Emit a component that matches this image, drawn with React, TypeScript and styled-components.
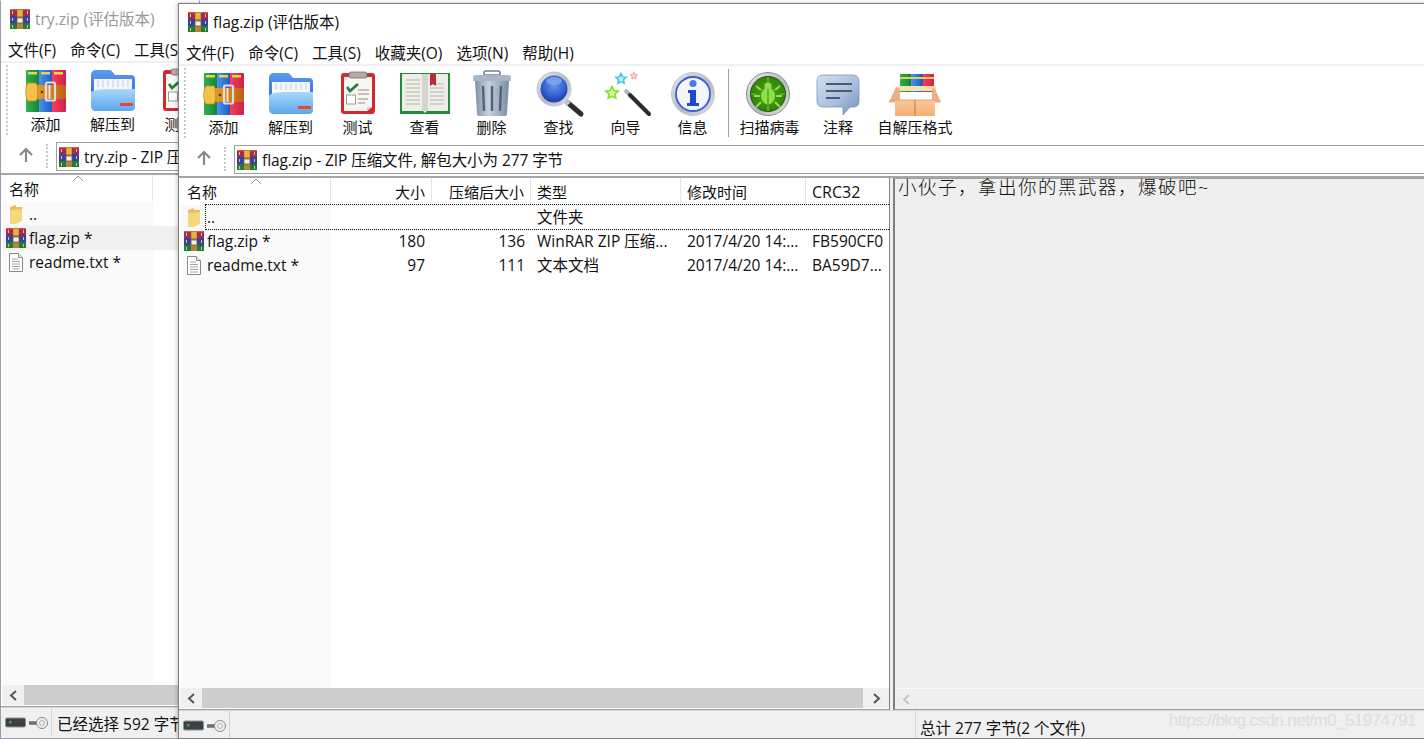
import React from "react";
import styled, { createGlobalStyle } from "styled-components";

const Global = createGlobalStyle`
  html, body { margin: 0; padding: 0; width: 1424px; height: 739px; overflow: hidden; background: #fff; }
  #root { width: 1424px; height: 739px; }
`;

const Desktop = styled.div`
  position: relative;
  width: 1424px;
  height: 739px;
  overflow: hidden;
  font-family: "Open Sans", "Noto Sans CJK SC", sans-serif;
  font-size: 15.5px;
  color: #111;
`;

const Frame = styled.section<{ $front?: boolean }>`
  position: absolute;
  left: ${(p) => (p.$front ? "178px" : "0")};
  top: ${(p) => (p.$front ? "3px" : "0")};
  width: ${(p) => (p.$front ? "1260px" : "200px")};
  height: ${(p) => (p.$front ? "736px" : "739px")};
  box-sizing: border-box;
  display: flex;
  flex-direction: column;
  overflow: hidden;
  background: #fff;
  border: 1px solid ${(p) => (p.$front ? "#7f7f7f" : "#9d9db0")};
  border-top-color: ${(p) => (p.$front ? "#7f7f7f" : "#fff")};
`;

const FrontShadow = styled.div`
  position: absolute;
  left: 178px;
  top: 3px;
  width: 1260px;
  height: 736px;
  box-shadow: -1px 0 4px rgba(0,0,0,.22);
`;

const TitleBar = styled.header<{ $front?: boolean }>`
  height: 37px;
  flex: none;
  display: flex;
  align-items: center;
  gap: 5px;
  padding: 0 0 2px 9px;
  box-sizing: border-box;
  color: ${(p) => (p.$front ? "#111" : "#999")};
`;

const MenuBar = styled.nav`
  height: 23px;
  flex: none;
  display: flex;
  gap: 14px;
  padding-left: 7px;
  align-items: center;
  border-bottom: 2px solid #f0f0f0;
  white-space: nowrap;
`;

const Toolbar = styled.div`
  height: 78px;
  flex: none;
  display: flex;
  padding-left: 5px;
  position: relative;
  align-items: flex-start;
`;

const Grip = styled.i<{ $h: number; $mr: number }>`
  flex: none;
  width: 0;
  height: ${(p) => p.$h}px;
  margin: 2px ${(p) => p.$mr}px 0 0;
  border-left: 2px dotted #c8c8c8;
`;

const ToolButton = styled.button<{ $w: number }>`
  width: ${(p) => p.$w}px;
  flex: none;
  height: 76px;
  padding: 4px 0 0;
  border: 0;
  background: none;
  font: inherit;
  font-size: 15px;
  color: inherit;
  display: flex;
  flex-direction: column;
  align-items: center;
  white-space: nowrap;
  span { margin-top: -2px; line-height: 22px; }
`;

const ToolSep = styled.div`
  width: 1px;
  height: 68px;
  background: #a0a0a0;
  flex: none;
  margin: 3px 6px 0 2px;
`;

const AddressRow = styled.div`
  height: 34px;
  flex: none;
  display: flex;
  align-items: flex-start;
  padding: 1px 0 0 5px;
  border-bottom: 2px solid #a6a6a6;
  box-sizing: border-box;
`;

const UpSlot = styled.div`
  width: 40px;
  height: 26px;
  flex: none;
  display: flex;
  align-items: center;
  justify-content: center;
`;

const AddressBox = styled.div`
  flex: 1;
  min-width: 0;
  height: 29px;
  box-sizing: border-box;
  margin-left: 8px;
  border: 1px solid #a0a0a0;
  border-right: 0;
  display: flex;
  align-items: center;
  gap: 5px;
  padding-left: 2px;
  white-space: nowrap;
  letter-spacing: -0.08px;
`;

const Content = styled.div`
  flex: 1;
  min-height: 0;
  display: flex;
`;

const ListPane = styled.div<{ $w: number }>`
  width: ${(p) => p.$w}px;
  flex: none;
  box-sizing: border-box;
  padding-left: 2px;
  border-right: 1px solid #7f7f7f;
  border-bottom: 1px solid #a0a0a0;
  display: flex;
  flex-direction: column;
  position: relative;
`;

const grid = "150px 101px 99px 150px 125px 83px";

const HeadRow = styled.div`
  height: 27px;
  flex: none;
  display: grid;
  grid-template-columns: ${grid};
  box-sizing: border-box;
`;

const HeadCell = styled.div<{ $right?: boolean }>`
  display: flex;
  align-items: center;
  justify-content: ${(p) => (p.$right ? "flex-end" : "flex-start")};
  padding: 1px 6px 0;
  border-right: 1px solid #e5e5e5;
  box-sizing: border-box;
  height: 26px;
  font-size: 15px;
  white-space: nowrap;
  position: relative;
  &:last-child:not(:first-child) { border-right: 0; font-size: 16px; }
`;

const SortCaret = styled.svg`
  position: absolute;
  left: 69px;
  top: 0;
`;

const Rows = styled.div`
  flex: 1;
  min-height: 0;
  display: grid;
  grid-template-columns: ${grid};
  grid-auto-rows: 24px;
  position: relative;
  background: linear-gradient(to right, #fafafa 150px, transparent 150px);
  align-content: start;
`;

const FocusBox = styled.div`
  position: absolute;
  left: 24px;
  right: 0;
  top: -1px;
  height: 24px;
  border: 1px dotted #111;
  border-right: 0;
  pointer-events: none;
`;

const Row = styled.div<{ $selected?: boolean }>`
  display: contents;
  & > div { background: ${(p) => (p.$selected ? "#f0f0f0" : "transparent")}; }
`;

const Cell = styled.div<{ $right?: boolean; $pr?: number }>`
  display: flex;
  align-items: center;
  justify-content: ${(p) => (p.$right ? "flex-end" : "flex-start")};
  padding: 0 ${(p) => p.$pr ?? 6}px 1px 6px;
  white-space: nowrap;
  overflow: hidden;
  box-sizing: border-box;
`;

const NameCell = styled(Cell)`
  padding: 0 0 1px 5px;
  gap: 3px;
`;

const IconBox = styled.span`
  width: 20px;
  flex: none;
  display: flex;
  justify-content: center;
  margin: 1px 0 0 -2px;
`;

const HScroll = styled.div`
  height: 20px;
  flex: none;
  margin: 0 0 1px -1px;
  display: flex;
  align-items: center;
  background: #f0f0f0;
`;

const ScrollBtn = styled.div<{ $w?: number }>`
  width: ${(p) => p.$w ?? 22}px;
  flex: none;
  display: flex;
  justify-content: center;
`;

const Thumb = styled.div`
  flex: 1;
  height: 20px;
  background: #cdcdcd;
`;

const Splitter = styled.div`
  width: 4px;
  flex: none;
  background: #f0f0f0;
`;

const CommentPane = styled.div`
  flex: 1;
  display: flex;
  flex-direction: column;
  background: #efefef;
  border-left: 2px solid #7f7f7f;
  border-top: 1px solid #a0a0a0;
  border-bottom: 1px solid #a0a0a0;
  min-width: 0;
  margin-left: -1px;
`;

const CommentText = styled.div`
  flex: 1;
  padding: 0 0 0 3px;
  margin-top: -1px;
  font-size: 18.5px;
  font-weight: 300;
  letter-spacing: 1.5px;
  line-height: 18px;
  color: #111;
  white-space: nowrap;
`;

const CommentScroll = styled.div`
  height: 20px;
  flex: none;
  display: flex;
  align-items: center;
  border-top: 1px solid #f8f8f8;
`;

const StatusBar = styled.footer<{ $front?: boolean }>`
  height: ${(p) => (p.$front ? "28px" : "31px")};
  flex: none;
  background: #f0f0f0;
  display: flex;
  align-items: flex-start;
  white-space: nowrap;
  box-sizing: border-box;
  border-top: 1px solid #d8d8d8;
`;

const StatusIcons = styled.div`
  width: 51px;
  height: 28px;
  flex: none;
  display: flex;
  align-items: center;
  padding: 1px 0 0 4px;
  box-sizing: border-box;
  border-right: 1px solid #d4d4d4;
`;

const StatusText = styled.div<{ $w?: number }>`
  ${(p) => (p.$w ? `width: ${p.$w}px; flex: none;` : "flex: 1;")}
  height: 28px;
  display: flex;
  align-items: center;
  padding: 2px 0 0 5px;
  box-sizing: border-box;
`;

const StatusTotal = styled(StatusText)`
  border-left: 1px solid #d4d4d4;
  padding: 4px 0 0 4px;
`;

const Watermark = styled.div`
  position: absolute;
  left: 1169px;
  top: 711px;
  font-family: "Liberation Sans", sans-serif;
  font-size: 17px;
  letter-spacing: -0.55px;
  color: #e2e2e2;
  text-shadow: 0 0 1px #d6d6d6, 1px 1px 0 #f8f8f8;
  white-space: nowrap;
`;

const Defs = () => (
  <svg width="0" height="0" style={{ position: "absolute" }} aria-hidden>
    <defs>
      <linearGradient id="gGreen" x1="0" x2="1" y1="0" y2="0"><stop offset="0" stopColor="#2fb24e" /><stop offset="1" stopColor="#157f37" /></linearGradient>
      <linearGradient id="gBlue" x1="0" x2="1" y1="0" y2="0"><stop offset="0" stopColor="#4c95ee" /><stop offset="1" stopColor="#1d55c4" /></linearGradient>
      <linearGradient id="gRed" x1="0" x2="1" y1="0" y2="0"><stop offset="0" stopColor="#f2405c" /><stop offset="1" stopColor="#d21f4b" /></linearGradient>
      <linearGradient id="gBelt" x1="0" x2="1" y1="0" y2="0"><stop offset="0" stopColor="#f0b030" /><stop offset=".5" stopColor="#d98a24" /><stop offset="1" stopColor="#b9601a" /></linearGradient>
      <linearGradient id="gFold" x1="0" x2="0" y1="0" y2="1"><stop offset="0" stopColor="#a9d8fb" /><stop offset="1" stopColor="#5aa6f0" /></linearGradient>
      <linearGradient id="gFoldBack" x1="0" x2="0" y1="0" y2="1"><stop offset="0" stopColor="#5b9cf0" /><stop offset="1" stopColor="#2c66d8" /></linearGradient>
      <linearGradient id="gSteel" x1="0" x2="1" y1="0" y2="0"><stop offset="0" stopColor="#7e8fa6" /><stop offset=".4" stopColor="#c7d2e0" /><stop offset="1" stopColor="#7a8ba3" /></linearGradient>
      <linearGradient id="gRing" x1="0" x2="1" y1="0" y2="1"><stop offset="0" stopColor="#e8ebf0" /><stop offset=".55" stopColor="#b4b8c0" /><stop offset="1" stopColor="#e2e4e8" /></linearGradient>
      <radialGradient id="gSphere" cx=".5" cy=".35" r=".7"><stop offset="0" stopColor="#6d97ea" /><stop offset=".6" stopColor="#2f5fd2" /><stop offset="1" stopColor="#16379b" /></radialGradient>
      <radialGradient id="gBug" cx=".5" cy=".5" r=".6"><stop offset="0" stopColor="#4eab12" /><stop offset="1" stopColor="#2a7a06" /></radialGradient>
      <linearGradient id="gBubble" x1="0" x2="1" y1="0" y2="1"><stop offset="0" stopColor="#d2dff0" /><stop offset=".55" stopColor="#a9c0de" /><stop offset="1" stopColor="#7390bb" /></linearGradient>
      <linearGradient id="gBox" x1="0" x2="0" y1="0" y2="1"><stop offset="0" stopColor="#fbc89a" /><stop offset="1" stopColor="#f6ad73" /></linearGradient>
    </defs>
  </svg>
);

const Glyph = ({ children }: { children: React.ReactNode }) => (
  <svg width="56" height="48" viewBox="0 0 56 48" style={{ flex: "none" }}>{children}</svg>
);

const AddIcon = () => (
  <Glyph>
    <rect x="8" y="3" width="14" height="42" rx="1" fill="url(#gGreen)" />
    <rect x="21" y="3" width="14" height="42" rx="1" fill="url(#gBlue)" />
    <rect x="34" y="3" width="14" height="42" rx="1" fill="url(#gRed)" />
    <rect x="10" y="5" width="9" height="2.5" fill="#e8d44a" />
    <rect x="23" y="5" width="9" height="2.5" fill="#e8d44a" />
    <rect x="36" y="5" width="9" height="2.5" fill="#e8d44a" />
    <rect x="8" y="18" width="40" height="14" fill="url(#gBelt)" />
    <path d="M10 16h8c2 3 2 15 0 18h-8c-3-3-3-15 0-18z" fill="#f3c347" stroke="#c98b20" strokeWidth=".8" />
    <circle cx="24" cy="25" r="1.3" fill="#5a3208" />
    <rect x="28" y="15.5" width="9" height="18" rx="1.5" fill="none" stroke="#e4ded2" strokeWidth="2.2" />
    <rect x="30.5" y="18" width="2" height="14" fill="#eee6d6" />
  </Glyph>
);

const ExtractIcon = () => (
  <Glyph>
    <path d="M6 8c0-3 2-5 5-5h13c2 0 3 1 4 2.5L30 8h16c3 0 4 2 4 4v20H6z" fill="url(#gFoldBack)" />
    <rect x="9" y="12" width="38" height="14" fill="#f3f6fb" />
    <path d="M13 13v7M18 13v7M23 13v7M28 13v7M33 13v7M38 13v7M43 13v7" stroke="#c8cfdb" strokeWidth="1" />
    <path d="M6 25c6-3 12-3 20-3h24v18c0 3-2 4-5 4H11c-3 0-5-2-5-5z" fill="url(#gFold)" />
    <rect x="35" y="36" width="13" height="3" rx=".5" fill="#e24a2c" />
  </Glyph>
);

const TestIcon = () => (
  <Glyph>
    <rect x="11" y="3" width="34" height="41" rx="3" fill="#d3282e" />
    <path d="M14 7h28v30l-5 4H14z" fill="#f7f6f2" />
    <path d="M37 41l5-4h-5z" fill="#cfcfc8" />
    <rect x="19" y="2" width="18" height="6" rx="2" fill="#b9a8a8" stroke="#6e6e6e" strokeWidth=".8" />
    <path d="M17 17l3 4 8-7" fill="none" stroke="#1d7f3c" strokeWidth="2.6" />
    <rect x="16.5" y="25" width="9" height="9" fill="#fff" stroke="#9a9a9a" />
    <path d="M28 20h11M28 24h11M28 29h10M28 33h7" stroke="#b0b0b0" strokeWidth="1.4" />
  </Glyph>
);

const ViewIcon = () => (
  <Glyph>
    <path d="M3 3h50v41H3z" fill="#23893c" />
    <path d="M5 4h21l2 3 2-3h21v37H30l-2 2-2-2H5z" fill="#eeeee8" />
    <path d="M25 4h6v37h-6z" fill="#d5d5ce" />
    <path d="M9 10h14M9 14h14M9 18h14M9 22h14M9 26h14M9 30h14M9 34h14M33 14h14M33 18h14M33 22h14M33 26h14M33 30h14M33 34h14" stroke="#b6b6b0" strokeWidth="1.2" />
    <path d="M33 4h6v12l-3-2-3 2z" fill="#c02a36" />
  </Glyph>
);

const DeleteIcon = () => (
  <Glyph>
    <rect x="20" y="1" width="16" height="4" rx="1.5" fill="none" stroke="#738096" strokeWidth="1.6" />
    <path d="M9 8c0-2 1-3 3-3h32c2 0 3 1 3 3v3H9z" fill="#a9b6c8" />
    <path d="M11 11h34l-2 33c0 1-1 2-2 2H15c-1 0-2-1-2-2z" fill="url(#gSteel)" />
    <path d="M19 16l1 25M28 16v25M37 16l-1 25" stroke="#556277" strokeWidth="2.4" />
  </Glyph>
);

const FindIcon = () => (
  <Glyph>
    <path d="M36 32l14 12" stroke="#2e2e2e" strokeWidth="5" strokeLinecap="round" />
    <path d="M33 29l5 5" stroke="#bfc3c8" strokeWidth="5" />
    <circle cx="23" cy="19" r="17" fill="url(#gRing)" stroke="#bfc4cc" />
    <circle cx="23" cy="19" r="13.5" fill="url(#gSphere)" />
    <ellipse cx="23" cy="11" rx="8" ry="4" fill="#8eadef" opacity=".7" />
  </Glyph>
);

const star = (cx: number, cy: number, r: number) => {
  const p: string[] = [];
  for (let i = 0; i < 10; i++) {
    const a = (Math.PI / 5) * i - Math.PI / 2;
    const q = i % 2 ? r * 0.48 : r;
    p.push(`${(cx + q * Math.cos(a)).toFixed(1)},${(cy + q * Math.sin(a)).toFixed(1)}`);
  }
  return p.join(" ");
};

const WizardIcon = () => (
  <Glyph>
    <polygon points={star(23, 9, 5.5)} fill="#b6f0fa" stroke="#3fc8e4" strokeWidth="1.5" />
    <polygon points={star(36, 6, 3.8)} fill="#ffd5dc" stroke="#f49aa8" strokeWidth="1" />
    <polygon points={star(14, 23, 6.5)} fill="#d6fb9c" stroke="#7fe22f" strokeWidth="1.6" />
    <path d="M27 20l6 6" stroke="#b0b4ba" strokeWidth="4" />
    <path d="M32 25l19 19" stroke="#2a2a2e" strokeWidth="4" strokeLinecap="round" />
  </Glyph>
);

const InfoIcon = () => (
  <Glyph>
    <circle cx="28" cy="24" r="21.5" fill="url(#gRing)" stroke="#c4c8cf" />
    <circle cx="28" cy="24" r="17" fill="#f4f6fb" stroke="#3a5fd0" strokeWidth="1.8" />
    <circle cx="28" cy="13.5" r="3.6" fill="#4a78e8" />
    <path d="M23 20h8v13h3v3H22v-3h3V23h-2z" fill="#2048d0" />
  </Glyph>
);

const ScanIcon = () => (
  <Glyph>
    <circle cx="26" cy="24" r="21.5" fill="url(#gRing)" stroke="#8d8f8c" />
    <circle cx="26" cy="24" r="17.5" fill="url(#gBug)" stroke="#1f5a05" />
    <path d="M26 7v5M26 36v5M9 24h5M38 24h5" stroke="#76c83a" strokeWidth="1.2" />
    <ellipse cx="26" cy="26" rx="7" ry="8.5" fill="#8fe04c" />
    <circle cx="26" cy="16" r="3.6" fill="#8fe04c" />
    <path d="M19 20l-5-4M33 20l5-4M18 26h-6M34 26h6M19 32l-5 5M33 32l5 5" stroke="#8fe04c" strokeWidth="2" />
    <path d="M26 19v15" stroke="#3f9308" strokeWidth="1" />
  </Glyph>
);

const CommentIcon = () => (
  <Glyph>
    <path d="M14 5h28c5 0 7 2 7 7v19c0 4-2 6-6 6h-3l-7 8v-8H14c-5 0-7-2-7-6V12c0-5 2-7 7-7z" fill="url(#gBubble)" stroke="#7d93b5" strokeWidth=".8" />
    <path d="M16 14h26M16 21h26M16 28h14" stroke="#4c596e" strokeWidth="2" />
  </Glyph>
);

const SfxIcon = () => (
  <Glyph>
    <g transform="translate(2 0)">
      <rect x="11" y="4" width="11" height="18" fill="url(#gGreen)" />
      <rect x="22" y="4" width="12" height="18" fill="url(#gBlue)" />
      <rect x="34" y="4" width="11" height="18" fill="url(#gRed)" />
      <rect x="11" y="7" width="34" height="2" fill="#e8d44a" />
      <path d="M9 16h38v5H9z" fill="#f9e3a4" />
      <path d="M7 17l-7 15 8 1 3-2V19z" fill="#ecb084" />
      <path d="M45 17l7 15-7 1-2-2V19z" fill="#ecb084" />
      <rect x="6" y="30" width="40" height="16" fill="url(#gBox)" />
      <path d="M26 30v16" stroke="#b97844" strokeWidth="1" />
      <path d="M0 32l6-2h40l6 2" stroke="#e3a06f" strokeWidth="1" fill="none" />
    </g>
  </Glyph>
);

const ArchiveMini = () => (
  <svg width="20" height="20" viewBox="0 0 20 20" style={{ flex: "none" }}>
    <rect y="0" width="20" height="7" fill="#a02c52" />
    <rect y="0" width="20" height="1.2" fill="#e0564a" />
    <rect y="7" width="20" height="7" fill="#3c3fa0" />
    <rect y="14" width="20" height="6" fill="#1f7d3a" />
    <path d="M7 0h6v20H7z" fill="#b4843f" />
    <path d="M7.5 1h5v6h-5z" fill="#eab23c" />
    <rect x="7" y="9" width="6" height="5" fill="#f2f2ea" stroke="#6d5b39" strokeWidth=".8" />
    <path d="M2.5 2v3M17.5 2v3M2.5 9v3M17.5 9v3M2.5 16v3M17.5 16v3" stroke="#e9c85a" strokeWidth="1" />
  </svg>
);

const FolderMini = () => (
  <svg width="15" height="19" viewBox="0 0 15 19">
    <path d="M1 2l6-2v2h6v11H1z" fill="#e4bf5e" />
    <path d="M1 5l12-1v12l-6 3H1z" fill="#f7d77d" />
  </svg>
);

const FileMini = () => (
  <svg width="16" height="19" viewBox="0 0 16 19">
    <path d="M1.5.5h9l4 4v14h-13z" fill="#fff" stroke="#8a8a8a" />
    <path d="M10.5.5v4h4" fill="#eee" stroke="#8a8a8a" />
    <path d="M4 6h6M4 8.5h8M4 11h8M4 13.5h8M4 16h8" stroke="#a6a6a6" />
  </svg>
);

const UpArrow = () => (
  <svg width="16" height="16" viewBox="0 0 16 16">
    <path d="M8 15V2M2 8l6-6 6 6" fill="none" stroke="#8a8a8a" strokeWidth="2.2" />
  </svg>
);

const Chevron = ({ dir, color = "#555" }: { dir: "l" | "r"; color?: string }) => (
  <svg width="9" height="11" viewBox="0 0 9 11">
    <path d={dir === "l" ? "M7 1L2 5.5 7 10" : "M2 1l5 4.5L2 10"} fill="none" stroke={color} strokeWidth="2" />
  </svg>
);

const DriveKey = () => (
  <svg width="44" height="14" viewBox="0 0 44 14" style={{ flex: "none" }}>
    <rect x="0.5" y="2" width="20" height="9" rx="1.5" fill="#3c4143" stroke="#8c9296" />
    <rect x="4" y="5" width="2.5" height="2.5" fill="#4ea048" />
    <path d="M24 7h10" stroke="#6c6c6c" strokeWidth="3.5" />
    <circle cx="37" cy="7" r="5.5" fill="#f0f0f0" stroke="#8c8c8c" />
    <circle cx="37" cy="7" r="2.5" fill="none" stroke="#b0b0b0" />
  </svg>
);

const menus = ["文件(F)", "命令(C)", "工具(S)", "收藏夹(O)", "选项(N)", "帮助(H)"];

const tools: { label: string; w: number; icon: React.ReactNode }[] = [
  { label: "添加", w: 67, icon: <AddIcon /> },
  { label: "解压到", w: 67, icon: <ExtractIcon /> },
  { label: "测试", w: 67, icon: <TestIcon /> },
  { label: "查看", w: 67, icon: <ViewIcon /> },
  { label: "删除", w: 67, icon: <DeleteIcon /> },
  { label: "查找", w: 67, icon: <FindIcon /> },
  { label: "向导", w: 67, icon: <WizardIcon /> },
  { label: "信息", w: 67, icon: <InfoIcon /> },
];

const tools2: { label: string; w: number; icon: React.ReactNode }[] = [
  { label: "扫描病毒", w: 69, icon: <ScanIcon /> },
  { label: "注释", w: 68, icon: <CommentIcon /> },
  { label: "自解压格式", w: 86, icon: <SfxIcon /> },
];

type FileRow = { name: string; icon: React.ReactNode; size?: string; packed?: string; type?: string; date?: string; crc?: string; selected?: boolean };

const Window = ({
  front, title, info, listWidth, rows, status,
}: {
  front?: boolean; title: string; info: string; listWidth: number; rows: FileRow[]; status: React.ReactNode;
}) => (
  <Frame $front={front}>
    <TitleBar $front={front}><ArchiveMini /><span>{title}</span></TitleBar>
    <MenuBar>{(front ? menus : menus.slice(0, 3)).map((m) => <span key={m}>{m}</span>)}</MenuBar>
    <Toolbar>
      <Grip $h={70} $mr={4} />
      {(front ? tools : tools.slice(0, 3)).map((t) => <ToolButton key={t.label} $w={t.w}>{t.icon}<span>{t.label}</span></ToolButton>)}
      {front && <ToolSep />}
      {front && tools2.map((t) => <ToolButton key={t.label} $w={t.w}>{t.icon}<span>{t.label}</span></ToolButton>)}
    </Toolbar>
    <AddressRow>
      <UpSlot><UpArrow /></UpSlot>
      <Grip $h={24} $mr={0} />
      <AddressBox><ArchiveMini /><span>{info}</span></AddressBox>
    </AddressRow>
    <Content>
      <ListPane $w={listWidth}>
        <HeadRow>
          <HeadCell>名称<SortCaret width="12" height="7" viewBox="0 0 12 7"><path d="M1 6l5-5 5 5" fill="none" stroke="#9a9a9a" /></SortCaret></HeadCell>
          {front && <HeadCell $right>大小</HeadCell>}
          {front && <HeadCell $right>压缩后大小</HeadCell>}
          {front && <HeadCell>类型</HeadCell>}
          {front && <HeadCell>修改时间</HeadCell>}
          {front && <HeadCell>CRC32</HeadCell>}
        </HeadRow>
        <Rows>
          {front && <FocusBox />}
          {rows.map((r) => (
            <Row key={r.name} $selected={r.selected}>
              <NameCell><IconBox>{r.icon}</IconBox><span>{r.name}</span></NameCell>
              <Cell $right $pr={7}>{r.size}</Cell>
              <Cell $right>{r.packed}</Cell>
              <Cell>{r.type}</Cell>
              <Cell>{r.date}</Cell>
              <Cell>{r.crc}</Cell>
            </Row>
          ))}
        </Rows>
        <HScroll>
          <ScrollBtn><Chevron dir="l" /></ScrollBtn>
          <Thumb />
          <ScrollBtn $w={26}><Chevron dir="r" /></ScrollBtn>
        </HScroll>
      </ListPane>
      {front && <Splitter />}
      {front && (
        <CommentPane>
          <CommentText>小伙子，拿出你的黑武器，爆破吧~</CommentText>
          <CommentScroll><ScrollBtn><Chevron dir="l" color="#c4c4c4" /></ScrollBtn></CommentScroll>
        </CommentPane>
      )}
    </Content>
    <StatusBar $front={front}>{status}</StatusBar>
  </Frame>
);

const frontRows: FileRow[] = [
  { name: "..", icon: <FolderMini />, type: "文件夹" },
  { name: "flag.zip *", icon: <ArchiveMini />, size: "180", packed: "136", type: "WinRAR ZIP 压缩...", date: "2017/4/20 14:...", crc: "FB590CF0" },
  { name: "readme.txt *", icon: <FileMini />, size: "97", packed: "111", type: "文本文档", date: "2017/4/20 14:...", crc: "BA59D7..." },
];

const backRows: FileRow[] = [
  { name: "..", icon: <FolderMini /> },
  { name: "flag.zip *", icon: <ArchiveMini />, selected: true },
  { name: "readme.txt *", icon: <FileMini /> },
];

export default function App() {
  return (
    <Desktop>
      <Global />
      <Defs />
      <Window
        title="try.zip (评估版本)"
        info="try.zip - ZIP 压缩文件"
        listWidth={800}
        rows={backRows}
        status={
          <>
            <StatusIcons><DriveKey /></StatusIcons>
            <StatusText>已经选择 592 字节</StatusText>
          </>
        }
      />
      <FrontShadow />
      <Window
        front
        title="flag.zip (评估版本)"
        info="flag.zip - ZIP 压缩文件, 解包大小为 277 字节"
        listWidth={711}
        rows={frontRows}
        status={
          <>
            <StatusIcons><DriveKey /></StatusIcons>
            <StatusText $w={685} />
            <StatusTotal>总计 277 字节(2 个文件)</StatusTotal>
          </>
        }
      />
      <Watermark>https://blog.csdn.net/m0_51974791</Watermark>
    </Desktop>
  );
}
